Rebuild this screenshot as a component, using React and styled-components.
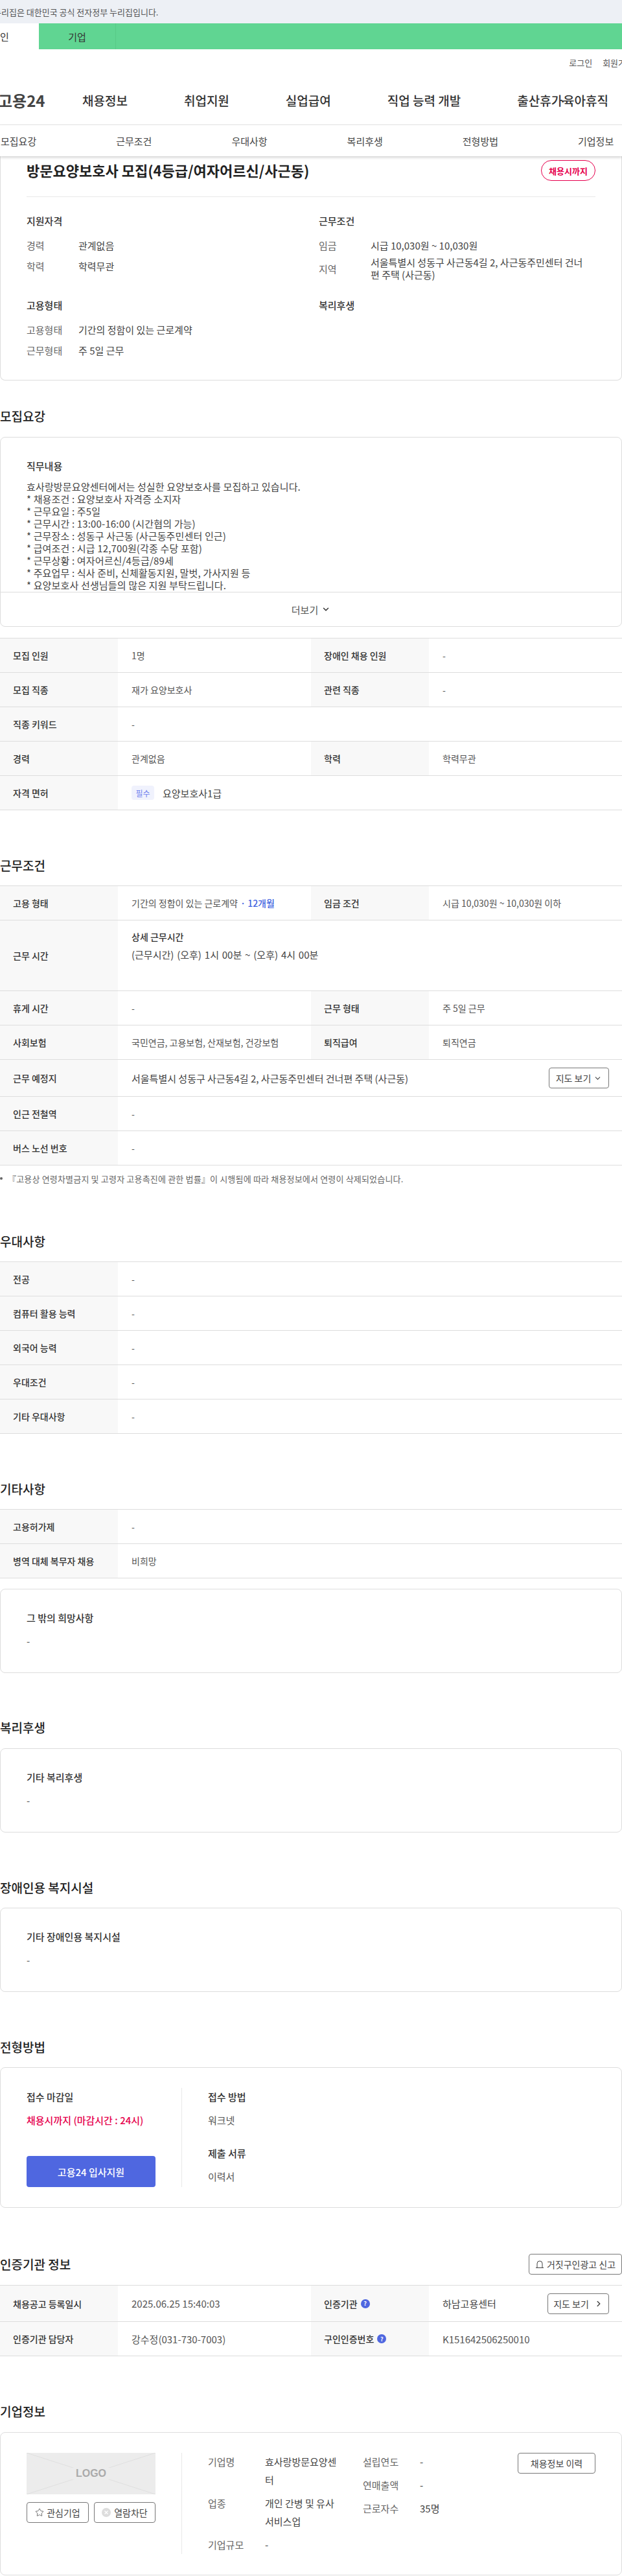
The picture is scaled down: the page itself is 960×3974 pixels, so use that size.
import React from "react";
import styled, { createGlobalStyle } from "styled-components";
import { ChevronDown, ChevronRight, Star } from "lucide-react";

const GlobalStyle = createGlobalStyle`
    html, body {
        margin: 0;
        padding: 0;
        background: #fff;
    }
    body {
        font-family: "Noto Sans CJK KR", "Noto Sans", sans-serif;
        color: #333;
    }
    * {
        box-sizing: border-box;
    }
`;

const Page = styled.div`
    width: 960px;
    height: 3974px;
    overflow: hidden;
`;

const GovBar = styled.div`
    height: 36px;
    background: #edf0f5;
    display: flex;
    align-items: center;
    font-size: 13px;
    color: #555;
    white-space: nowrap;
    span {
        margin-left: -10px;
    }
`;

const AudienceBar = styled.div`
    height: 40px;
    background: #60d592;
    display: flex;
`;

const AudienceTab = styled.div`
    height: 40px;
    width: ${({ $active }) => ($active ? "60px" : "119px")};
    display: flex;
    align-items: center;
    justify-content: center;
    font-size: 15px;
    color: #333;
    background: ${({ $active }) => ($active ? "#fff" : "transparent")};
    border-right: ${({ $active }) => ($active ? "none" : "1px solid #58c987")};
    white-space: nowrap;
    span {
        margin-left: ${({ $active }) => ($active ? "-60px" : "0")};
    }
`;

const UtilRow = styled.div`
    height: 40px;
    display: flex;
    justify-content: flex-end;
    align-items: center;
    gap: 16px;
    margin-right: -18px;
    font-size: 13px;
    color: #555;
`;

const MainNav = styled.div`
    height: 77px;
    display: flex;
    align-items: center;
    gap: 87px;
    border-bottom: 1px solid #e6e6e6;
`;

const Logo = styled.div`
    width: 40px;
    font-size: 24px;
    font-weight: 700;
    color: #444;
    margin-left: 0;
    white-space: nowrap;
    span {
        margin-left: -3px;
    }
`;

const NavItem = styled.div`
    font-size: 19px;
    font-weight: 500;
    color: #333;
    white-space: nowrap;
`;

const NavDot = styled.span`
    margin: 0 -5px;
`;

const SubNav = styled.div`
    height: 48px;
    padding-left: 1px;
    display: flex;
    align-items: center;
    gap: 123px;
    font-size: 15px;
    color: #444;
    position: relative;
    z-index: 2;
    background: #fff;
    box-shadow: 0 2px 4px rgba(0, 0, 0, 0.18);
    white-space: nowrap;
`;

const SummaryCard = styled.div`
    height: 346px;
    padding: 6px 40px 0 40px;
    border: 1px solid #ddd;
    border-top: none;
    border-radius: 0 0 8px 8px;
`;

const SummaryHead = styled.div`
    display: flex;
    justify-content: space-between;
    align-items: flex-start;
    padding-bottom: 24px;
    border-bottom: 1px solid #e8e8e8;
`;

const JobTitle = styled.h1`
    margin: 0;
    font-size: 22px;
    line-height: 30px;
    font-weight: 700;
    color: #222;
`;

const StatusPill = styled.div`
    width: 84px;
    height: 32px;
    border: 1px solid #e6004d;
    border-radius: 16px;
    display: flex;
    align-items: center;
    justify-content: center;
    font-size: 13px;
    font-weight: 700;
    color: #e6004d;
`;

const SummaryGrid = styled.div`
    display: grid;
    grid-template-columns: 451px 1fr;
    row-gap: 28px;
    padding-top: 27px;
`;

const GroupTitle = styled.div`
    font-size: 15px;
    line-height: 20px;
    font-weight: 500;
    color: #333;
    margin-bottom: 15px;
`;

const FactList = styled.div`
    display: flex;
    flex-direction: column;
    gap: ${({ $gap }) => $gap || 8}px;
`;

const Fact = styled.div`
    display: flex;
    align-items: center;
    min-height: 24px;
    font-size: 15px;
    line-height: 19px;
`;

const FactLabel = styled.div`
    width: 80px;
    flex: none;
    color: #666;
`;

const FactValue = styled.div`
    color: #444;
    width: 340px;
`;

const Section = styled.section`
    padding-top: ${({ $top }) => $top}px;
`;

const SectionHead = styled.div`
    display: flex;
    justify-content: space-between;
    align-items: center;
    height: ${({ $tall }) => ($tall ? 32 : 26)}px;
    margin-bottom: ${({ $after }) => $after ?? 18}px;
`;

const Heading = styled.h2`
    margin: 0;
    font-size: 19px;
    line-height: 26px;
    font-weight: 500;
    color: #222;
`;

const Card = styled.div`
    border: 1px solid #ddd;
    border-radius: 8px;
    height: ${({ $h }) => $h}px;
    margin-top: ${({ $mt }) => $mt || 0}px;
    overflow: hidden;
`;

const CardBody = styled.div`
    padding: 34px 40px 0 40px;
    font-size: 15px;
`;

const CardTitle = styled.div`
    font-size: 15px;
    line-height: 20px;
    font-weight: 500;
    color: #333;
    margin-bottom: ${({ $after }) => $after ?? 16}px;
`;

const CardText = styled.div`
    font-size: 15px;
    line-height: 19px;
    color: #555;
    white-space: pre-line;
`;

const DutyText = styled(CardText)`
    height: 171px;
    overflow: hidden;
    color: #444;
    letter-spacing: 0.15px;
`;

const MoreRow = styled.div`
    height: 53px;
    margin-top: 1px;
    border-top: 1px solid #ddd;
    display: flex;
    align-items: center;
    justify-content: center;
    gap: 5px;
    font-size: 15px;
    color: #555;
    svg {
        color: #333;
    }
`;

const Table = styled.div`
    border-top: 1px solid #ddd;
    margin-top: ${({ $mt }) => $mt || 0}px;
`;

const Row = styled.div`
    display: grid;
    grid-template-columns: 182px 298px 182px 1fr;
    height: ${({ $h }) => $h || 53}px;
    border-bottom: 1px solid #ddd;
    font-size: 14px;
`;

const Th = styled.div`
    background: #f8f8f8;
    padding-left: 20px;
    display: flex;
    align-items: center;
    font-weight: 500;
    color: #333;
`;

const Td = styled.div`
    padding-left: 21px;
    padding-right: ${({ $action }) => ($action ? "20px" : "0")};
    display: flex;
    align-items: center;
    justify-content: ${({ $action }) => ($action ? "space-between" : "flex-start")};
    grid-column: ${({ $wide }) => ($wide ? "span 3" : "auto")};
    font-size: ${({ $large }) => ($large ? "15px" : "14px")};
    color: #555;
    white-space: nowrap;
`;

const Highlight = styled.span`
    color: #3f63e0;
    font-weight: 500;
    margin-left: 4px;
`;

const RequiredBadge = styled.span`
    width: 35px;
    height: 22px;
    border-radius: 4px;
    background: #f0f2fd;
    color: #6f82ee;
    font-size: 12px;
    display: flex;
    align-items: center;
    justify-content: center;
    margin-right: 13px;
`;

const License = styled.span`
    font-size: 15px;
    color: #444;
`;

const HoursBlock = styled.div`
    margin-top: -30px;
    line-height: 19px;
`;

const HoursTitle = styled.div`
    font-weight: 500;
    color: #333;
    margin-bottom: 8px;
`;

const HoursText = styled.div`
    font-size: 15px;
    word-spacing: 1.5px;
    color: #444;
`;

const OutlineButton = styled.button`
    height: 32px;
    width: ${({ $w }) => $w}px;
    flex: none;
    border: 1px solid #777;
    border-radius: 4px;
    background: #fff;
    display: flex;
    align-items: center;
    justify-content: center;
    gap: ${({ $gap }) => $gap ?? 4}px;
    padding: 0;
    font-family: inherit;
    font-size: ${({ $fs }) => $fs || 14}px;
    color: #444;
    white-space: nowrap;
`;

const Note = styled.div`
    margin-top: 11px;
    display: flex;
    align-items: center;
    height: 18px;
    font-size: 13px;
    letter-spacing: 0.18px;
    color: #666;
    &::before {
        content: "";
        width: 4px;
        height: 4px;
        border-radius: 50%;
        background: #666;
        margin-right: 8px;
    }
`;

const SplitCard = styled(Card)`
    display: flex;
    padding: 31px 40px 0 40px;
`;

const SideColumn = styled.div`
    width: 199px;
    flex: none;
    height: 153px;
    padding-top: 4px;
    display: flex;
    flex-direction: column;
`;

const Rule = styled.div`
    width: 1px;
    flex: none;
    height: ${({ $h }) => $h}px;
    background: #e8e8e8;
    margin: 0 40px;
`;

const BlockLabel = styled.div`
    font-size: 15px;
    line-height: 20px;
    font-weight: 500;
    color: #333;
    margin-bottom: 16px;
`;

const Deadline = styled.div`
    font-size: 15px;
    line-height: 19px;
    font-weight: 500;
    color: #e6004d;
`;

const ApplyButton = styled.button`
    height: 48px;
    margin-top: auto;
    border: none;
    border-radius: 4px;
    background: #4f67e0;
    color: #fff;
    font-family: inherit;
    font-size: 15px;
    font-weight: 500;
`;

const MethodColumn = styled.div`
    padding-top: 4px;
`;

const MethodValue = styled(CardText)`
    margin-bottom: 32px;
`;

const HelpDot = styled.span`
    width: 14px;
    height: 14px;
    margin-left: 5px;
    border-radius: 50%;
    background: #4f67e0;
    color: #fff;
    font-size: 9px;
    font-weight: 700;
    display: flex;
    align-items: center;
    justify-content: center;
`;

const CompanyCard = styled(Card)`
    display: flex;
    padding: 31px 40px 0 40px;
`;

const LogoColumn = styled.div`
    width: 199px;
    flex: none;
`;

const LogoBox = styled.div`
    height: 64px;
    background: #ececec;
    position: relative;
    display: flex;
    align-items: center;
    justify-content: center;
    svg {
        position: absolute;
        inset: 0;
        width: 100%;
        height: 100%;
    }
`;

const LogoMark = styled.span`
    position: relative;
    background: #ececec;
    padding: 0 18px;
    font-family: "Liberation Sans", sans-serif;
    font-size: 16px;
    font-weight: 700;
    color: #aaa;
`;

const LogoActions = styled.div`
    display: flex;
    justify-content: space-between;
    margin-top: 12px;
`;

const CompanyList = styled.div`
    width: ${({ $w }) => $w}px;
    flex: none;
    display: flex;
    flex-direction: column;
    gap: 8px;
`;

const CompanyFact = styled.div`
    display: flex;
    font-size: 15px;
    line-height: 28px;
`;

const CompanyLabel = styled.div`
    width: 88px;
    flex: none;
    color: #666;
`;

const CompanyValue = styled.div`
    width: 112px;
    color: #444;
`;

const BlockedIcon = () => (
    <svg width="14" height="14" viewBox="0 0 14 14">
        <circle cx="7" cy="7" r="7" fill="#ddd" />
        <path d="M4.5 4.5l5 5M9.5 4.5l-5 5" stroke="#fff" strokeWidth="1.4" />
    </svg>
);

const BellIcon = () => (
    <svg width="14" height="14" viewBox="0 0 14 14" fill="none" stroke="#444" strokeWidth="1">
        <path d="M3 12.5V6a4 4 0 0 1 8 0v6.5" />
        <path d="M1 12.5h12" />
    </svg>
);

const dutyLines = `효사랑방문요양센터에서는 성실한 요양보호사를 모집하고 있습니다.
* 채용조건 : 요양보호사 자격증 소지자
* 근무요일 : 주5일
* 근무시간 : 13:00-16:00 (시간협의 가능)
* 근무장소 : 성동구 사근동 (사근동주민센터 인근)
* 급여조건 : 시급 12,700원(각종 수당 포함)
* 근무상황 : 여자어르신/4등급/89세
* 주요업무 : 식사 준비, 신체활동지원, 말벗, 가사지원 등
* 요양보호사 선생님들의 많은 지원 부탁드립니다.`;

const subNavItems = ["모집요강", "근무조건", "우대사항", "복리후생", "전형방법", "기업정보"];
const navItems = ["채용정보", "취업지원", "실업급여", "직업 능력 개발"];
const preferRows = ["전공", "컴퓨터 활용 능력", "외국어 능력", "우대조건", "기타 우대사항"];

function TextCard({ title, h, mt }) {
    return (
        <Card $h={h} $mt={mt}>
            <CardBody>
                <CardTitle>{title}</CardTitle>
                <CardText>-</CardText>
            </CardBody>
        </Card>
    );
}

function App() {
    return (
        <Page>
            <GlobalStyle />
            <GovBar>
                <span>누리집은 대한민국 공식 전자정부 누리집입니다.</span>
            </GovBar>
            <AudienceBar>
                <AudienceTab $active>
                    <span>개인</span>
                </AudienceTab>
                <AudienceTab>
                    <span>기업</span>
                </AudienceTab>
            </AudienceBar>
            <UtilRow>
                <span>로그인</span>
                <span>회원가입</span>
            </UtilRow>
            <MainNav>
                <Logo>
                    <span>고용24</span>
                </Logo>
                {navItems.map((item) => (
                    <NavItem key={item}>{item}</NavItem>
                ))}
                <NavItem>
                    출산휴가<NavDot>·</NavDot>육아휴직
                </NavItem>
            </MainNav>
            <SubNav>
                {subNavItems.map((item) => (
                    <span key={item}>{item}</span>
                ))}
            </SubNav>

            <SummaryCard>
                <SummaryHead>
                    <JobTitle>방문요양보호사 모집(4등급/여자어르신/사근동)</JobTitle>
                    <StatusPill>채용시까지</StatusPill>
                </SummaryHead>
                <SummaryGrid>
                    <div>
                        <GroupTitle>지원자격</GroupTitle>
                        <FactList>
                            <Fact>
                                <FactLabel>경력</FactLabel>
                                <FactValue>관계없음</FactValue>
                            </Fact>
                            <Fact>
                                <FactLabel>학력</FactLabel>
                                <FactValue>학력무관</FactValue>
                            </Fact>
                        </FactList>
                    </div>
                    <div>
                        <GroupTitle>근무조건</GroupTitle>
                        <FactList $gap={5}>
                            <Fact>
                                <FactLabel>임금</FactLabel>
                                <FactValue>시급 10,030원 ~ 10,030원</FactValue>
                            </Fact>
                            <Fact>
                                <FactLabel>지역</FactLabel>
                                <FactValue>서울특별시 성동구 사근동4길 2, 사근동주민센터 건너편 주택 (사근동)</FactValue>
                            </Fact>
                        </FactList>
                    </div>
                    <div>
                        <GroupTitle>고용형태</GroupTitle>
                        <FactList>
                            <Fact>
                                <FactLabel>고용형태</FactLabel>
                                <FactValue>기간의 정함이 있는 근로계약</FactValue>
                            </Fact>
                            <Fact>
                                <FactLabel>근무형태</FactLabel>
                                <FactValue>주 5일 근무</FactValue>
                            </Fact>
                        </FactList>
                    </div>
                    <div>
                        <GroupTitle>복리후생</GroupTitle>
                    </div>
                </SummaryGrid>
            </SummaryCard>

            <Section $top={42}>
                <SectionHead $after={19}>
                    <Heading>모집요강</Heading>
                </SectionHead>
                <Card $h={293}>
                    <CardBody>
                        <CardTitle $after={12}>직무내용</CardTitle>
                        <DutyText>{dutyLines}</DutyText>
                    </CardBody>
                    <MoreRow>
                        더보기
                        <ChevronDown size={14} strokeWidth={2.5} />
                    </MoreRow>
                </Card>
                <Table $mt={17}>
                    <Row>
                        <Th>모집 인원</Th>
                        <Td>1명</Td>
                        <Th>장애인 채용 인원</Th>
                        <Td>-</Td>
                    </Row>
                    <Row>
                        <Th>모집 직종</Th>
                        <Td>재가 요양보호사</Td>
                        <Th>관련 직종</Th>
                        <Td>-</Td>
                    </Row>
                    <Row>
                        <Th>직종 키워드</Th>
                        <Td $wide>-</Td>
                    </Row>
                    <Row>
                        <Th>경력</Th>
                        <Td>관계없음</Td>
                        <Th>학력</Th>
                        <Td>학력무관</Td>
                    </Row>
                    <Row>
                        <Th>자격 면허</Th>
                        <Td $wide>
                            <RequiredBadge>필수</RequiredBadge>
                            <License>요양보호사1급</License>
                        </Td>
                    </Row>
                </Table>
            </Section>

            <Section $top={72}>
                <SectionHead>
                    <Heading>근무조건</Heading>
                </SectionHead>
                <Table>
                    <Row>
                        <Th>고용 형태</Th>
                        <Td>
                            기간의 정함이 있는 근로계약<Highlight>· 12개월</Highlight>
                        </Td>
                        <Th>임금 조건</Th>
                        <Td>시급 10,030원 ~ 10,030원 이하</Td>
                    </Row>
                    <Row $h={109}>
                        <Th>근무 시간</Th>
                        <Td $wide>
                            <HoursBlock>
                                <HoursTitle>상세 근무시간</HoursTitle>
                                <HoursText>(근무시간) (오후) 1시 00분 ~ (오후) 4시 00분</HoursText>
                            </HoursBlock>
                        </Td>
                    </Row>
                    <Row>
                        <Th>휴게 시간</Th>
                        <Td>-</Td>
                        <Th>근무 형태</Th>
                        <Td>주 5일 근무</Td>
                    </Row>
                    <Row>
                        <Th>사회보험</Th>
                        <Td>국민연금, 고용보험, 산재보험, 건강보험</Td>
                        <Th>퇴직급여</Th>
                        <Td>퇴직연금</Td>
                    </Row>
                    <Row $h={57}>
                        <Th>근무 예정지</Th>
                        <Td $wide $action>
                            <License>서울특별시 성동구 사근동4길 2, 사근동주민센터 건너편 주택 (사근동)</License>
                            <OutlineButton $w={93}>
                                지도 보기
                                <ChevronDown size={13} />
                            </OutlineButton>
                        </Td>
                    </Row>
                    <Row>
                        <Th>인근 전철역</Th>
                        <Td $wide>-</Td>
                    </Row>
                    <Row>
                        <Th>버스 노선 번호</Th>
                        <Td $wide>-</Td>
                    </Row>
                </Table>
                <Note>『고용상 연령차별금지 및 고령자 고용촉진에 관한 법률』이 시행됨에 따라 채용정보에서 연령이 삭제되었습니다.</Note>
            </Section>

            <Section $top={75}>
                <SectionHead>
                    <Heading>우대사항</Heading>
                </SectionHead>
                <Table>
                    {preferRows.map((label) => (
                        <Row key={label}>
                            <Th>{label}</Th>
                            <Td $wide>-</Td>
                        </Row>
                    ))}
                </Table>
            </Section>

            <Section $top={72}>
                <SectionHead>
                    <Heading>기타사항</Heading>
                </SectionHead>
                <Table>
                    <Row>
                        <Th>고용허가제</Th>
                        <Td $wide>-</Td>
                    </Row>
                    <Row>
                        <Th>병역 대체 복무자 채용</Th>
                        <Td $wide>비희망</Td>
                    </Row>
                </Table>
                <TextCard title="그 밖의 희망사항" h={130} mt={16} />
            </Section>

            <Section $top={71}>
                <SectionHead $after={19}>
                    <Heading>복리후생</Heading>
                </SectionHead>
                <TextCard title="기타 복리후생" h={130} />
            </Section>

            <Section $top={72}>
                <SectionHead>
                    <Heading>장애인용 복지시설</Heading>
                </SectionHead>
                <TextCard title="기타 장애인용 복지시설" h={130} />
            </Section>

            <Section $top={72}>
                <SectionHead>
                    <Heading>전형방법</Heading>
                </SectionHead>
                <SplitCard $h={217}>
                    <SideColumn>
                        <BlockLabel>접수 마감일</BlockLabel>
                        <Deadline>채용시까지 (마감시간 : 24시)</Deadline>
                        <ApplyButton>고용24 입사지원</ApplyButton>
                    </SideColumn>
                    <Rule $h={153} />
                    <MethodColumn>
                        <BlockLabel>접수 방법</BlockLabel>
                        <MethodValue>워크넷</MethodValue>
                        <BlockLabel>제출 서류</BlockLabel>
                        <CardText>이력서</CardText>
                    </MethodColumn>
                </SplitCard>
            </Section>

            <Section $top={71}>
                <SectionHead $tall $after={16}>
                    <Heading>인증기관 정보</Heading>
                    <OutlineButton $w={144}>
                        <BellIcon />
                        거짓구인광고 신고
                    </OutlineButton>
                </SectionHead>
                <Table>
                    <Row $h={56}>
                        <Th>채용공고 등록일시</Th>
                        <Td $large>2025.06.25 15:40:03</Td>
                        <Th>
                            인증기관
                            <HelpDot>?</HelpDot>
                        </Th>
                        <Td $action $large>
                            <License>하남고용센터</License>
                            <OutlineButton $w={95} $gap={8}>
                                지도 보기
                                <ChevronRight size={14} strokeWidth={2.5} />
                            </OutlineButton>
                        </Td>
                    </Row>
                    <Row>
                        <Th>인증기관 담당자</Th>
                        <Td $large>강수정(031-730-7003)</Td>
                        <Th>
                            구인인증번호
                            <HelpDot>?</HelpDot>
                        </Th>
                        <Td $large>K151642506250010</Td>
                    </Row>
                </Table>
            </Section>

            <Section $top={72}>
                <SectionHead $after={19}>
                    <Heading>기업정보</Heading>
                </SectionHead>
                <CompanyCard $h={221}>
                    <LogoColumn>
                        <LogoBox>
                            <svg viewBox="0 0 199 64" preserveAspectRatio="none">
                                <path d="M0 0L199 64M199 0L0 64" stroke="#dfdfdf" strokeWidth="1" fill="none" />
                            </svg>
                            <LogoMark>LOGO</LogoMark>
                        </LogoBox>
                        <LogoActions>
                            <OutlineButton $w={96} $gap={4}>
                                <Star size={14} strokeWidth={1.3} />
                                관심기업
                            </OutlineButton>
                            <OutlineButton $w={95} $gap={5}>
                                <BlockedIcon />
                                열람차단
                            </OutlineButton>
                        </LogoActions>
                    </LogoColumn>
                    <Rule $h={156} />
                    <CompanyList $w={239}>
                        <CompanyFact>
                            <CompanyLabel>기업명</CompanyLabel>
                            <CompanyValue>효사랑방문요양센터</CompanyValue>
                        </CompanyFact>
                        <CompanyFact>
                            <CompanyLabel>업종</CompanyLabel>
                            <CompanyValue>개인 간병 및 유사 서비스업</CompanyValue>
                        </CompanyFact>
                        <CompanyFact>
                            <CompanyLabel>기업규모</CompanyLabel>
                            <CompanyValue>-</CompanyValue>
                        </CompanyFact>
                    </CompanyList>
                    <CompanyList $w={239}>
                        <CompanyFact>
                            <CompanyLabel>설립연도</CompanyLabel>
                            <CompanyValue>-</CompanyValue>
                        </CompanyFact>
                        <CompanyFact>
                            <CompanyLabel>연매출액</CompanyLabel>
                            <CompanyValue>-</CompanyValue>
                        </CompanyFact>
                        <CompanyFact>
                            <CompanyLabel>근로자수</CompanyLabel>
                            <CompanyValue>35명</CompanyValue>
                        </CompanyFact>
                    </CompanyList>
                    <OutlineButton $w={120}>채용정보 이력</OutlineButton>
                </CompanyCard>
            </Section>
        </Page>
    );
}

export default App;
